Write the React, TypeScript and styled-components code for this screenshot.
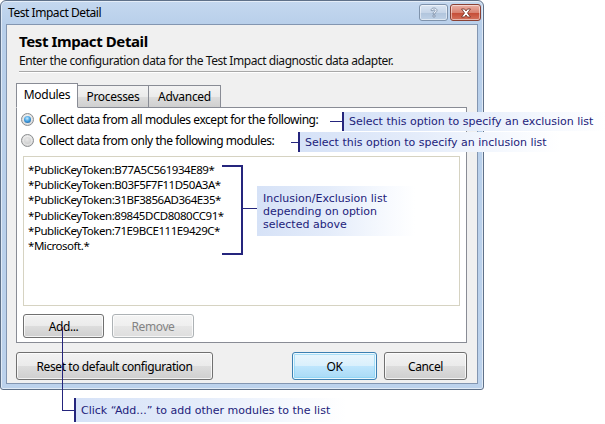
import React from 'react';
import styled, { createGlobalStyle, css } from 'styled-components';

const GlobalStyle = createGlobalStyle`
  html, body {
    margin: 0;
    padding: 0;
    background: #ffffff;
  }
  body {
    font-family: "Noto Sans", "Liberation Sans", sans-serif;
    font-size: 12px;
    color: #000;
  }
`;

const UI_FONT = `"Noto Sans", "Liberation Sans", sans-serif`;
const NOTE_FONT = `"DejaVu Sans", "Liberation Sans", sans-serif`;
const NAVY = '#25257d';

const Stage = styled.div`
  position: relative;
  width: 605px;
  height: 424px;
  overflow: hidden;
  background: #ffffff;
`;

const Window = styled.div`
  width: 484px;
  height: 390px;
  box-sizing: border-box;
  border: 1px solid #5f7189;
  border-radius: 6px 6px 3px 3px;
  background: linear-gradient(#c4d8ef, #b8cfea 24px, #bcd2ec);
  box-shadow: inset 0 0 0 1px rgba(255, 255, 255, 0.55);
  display: flex;
  flex-direction: column;
  padding: 0 5px 5px;
`;

const TitleBar = styled.div`
  height: 23px;
  display: flex;
  justify-content: space-between;
  align-items: flex-start;
`;

const Title = styled.div`
  font: 12px ${UI_FONT};
  line-height: 24px;
  padding-left: 2px;
  letter-spacing: -0.45px;
`;

const CaptionButtons = styled.div`
  display: flex;
  gap: 2px;
  margin: 3px -3px 0 0;
`;

const CaptionButton = styled.div<{ $close?: boolean }>`
  width: 29px;
  height: 17px;
  box-sizing: border-box;
  border: 1px solid #7f93ac;
  border-radius: 3px;
  display: flex;
  align-items: center;
  justify-content: center;
  background: linear-gradient(#dbe6f3, #c6d5e8 50%, #b0c4dc 51%, #bfd1e6);
  box-shadow: inset 0 0 0 1px rgba(255, 255, 255, 0.5);
  ${(p) =>
    p.$close &&
    css`
      width: 31px;
      border-color: #8a4134;
      background: linear-gradient(#eab0a5, #d98372 50%, #c44a34 51%, #d4725d);
    `}
`;

const Client = styled.div`
  flex: 1;
  background: #f0f0f0;
  border: 1px solid #8396b1;
  display: flex;
  flex-direction: column;
`;

const Header = styled.div`
  padding: 6px 6px 0 12px;
`;

const Heading = styled.div`
  font: bold 15px ${UI_FONT};
  line-height: 20px;
  letter-spacing: -0.4px;
  margin-bottom: 2px;
`;

const Description = styled.div`
  font: 12px ${UI_FONT};
  line-height: 16px;
  letter-spacing: -0.45px;
  color: #111;
`;

const Separator = styled.div`
  margin-top: 2px;
  height: 1px;
  background: #a8a8a8;
  box-shadow: 0 1px 0 #ffffff;
`;

const TabArea = styled.div`
  margin: 11px 10px 0 9px;
  display: flex;
  flex-direction: column;
`;

const TabStrip = styled.div`
  display: flex;
  align-items: flex-end;
  height: 25px;
  position: relative;
  z-index: 1;
  margin-bottom: -1px;
`;

const Tab = styled.div<{ $active?: boolean; $width: number }>`
  width: ${(p) => p.$width}px;
  height: 23px;
  box-sizing: border-box;
  border: 1px solid #898c95;
  margin-right: -1px;
  display: flex;
  align-items: center;
  justify-content: center;
  font: 12px ${UI_FONT};
  letter-spacing: -0.3px;
  background: linear-gradient(#f3f3f3, #ebebeb 50%, #dddddd 51%, #cfcfcf);
  ${(p) =>
    p.$active &&
    css`
      height: 25px;
      background: #ffffff;
      border-bottom-color: #ffffff;
      padding-bottom: 2px;
      position: relative;
      z-index: 2;
    `}
`;

const Panel = styled.div`
  border: 1px solid #898c95;
  background: #ffffff;
  padding: 1px 6px 4px;
  display: flex;
  flex-direction: column;
`;

const RadioRow = styled.label`
  height: 21px;
  display: flex;
  align-items: center;
  gap: 5px;
  padding-left: 4px;
  margin-left: -6px;
  font: 12px ${UI_FONT};
  letter-spacing: -0.45px;
`;

const Radio = styled.span<{ $checked?: boolean }>`
  width: 13px;
  height: 13px;
  box-sizing: border-box;
  border-radius: 50%;
  border: 1px solid #8a8c8e;
  background: radial-gradient(circle at 50% 40%, #f6f6f6 20%, #d4d4d4 80%);
  display: flex;
  align-items: center;
  justify-content: center;

  &::after {
    content: '';
    width: 7px;
    height: 7px;
    border-radius: 50%;
    background: ${(p) =>
      p.$checked
        ? 'radial-gradient(circle at 45% 35%, #c8ecff 0%, #46a2e2 45%, #104f8e 100%)'
        : 'radial-gradient(circle at 45% 35%, #e8e8e8 0%, #c6c6c6 100%)'};
  }
`;

const ModuleList = styled.div`
  margin-top: 5px;
  height: 150px;
  box-sizing: border-box;
  border: 1px solid #d6d3c2;
  padding: 5px 4px;
  background: #ffffff;
`;

const ModuleItem = styled.div`
  font: 11.5px ${UI_FONT};
  line-height: 15.2px;
  letter-spacing: -0.45px;
`;

const ButtonRow = styled.div`
  display: flex;
  gap: 8px;
  margin-top: 8px;
`;

const Button = styled.button<{ $width: number; $height?: number; $default?: boolean }>`
  width: ${(p) => p.$width}px;
  height: ${(p) => p.$height ?? 24}px;
  box-sizing: border-box;
  border: 1px solid #707070;
  border-radius: 3px;
  padding: 0;
  font: 12px ${UI_FONT};
  letter-spacing: -0.4px;
  color: #000;
  background: linear-gradient(#f2f2f2, #ebebeb 50%, #dddddd 51%, #cfcfcf);
  box-shadow: inset 0 0 0 1px rgba(255, 255, 255, 0.75);

  &:disabled {
    border-color: #adb2b5;
    color: #838383;
    background: linear-gradient(#f4f4f4, #efefef 50%, #e6e6e6 51%, #dedede);
  }

  ${(p) =>
    p.$default &&
    css`
      border-color: #3c7fb1;
      background: linear-gradient(#eaf6fd, #d9f0fc 50%, #bee6fd 51%, #a7d9f5);
      box-shadow: inset 0 0 0 1px rgba(255, 255, 255, 0.8), inset 0 0 0 2px rgba(128, 210, 245, 0.6);
    `}
`;

const Footer = styled.div`
  display: flex;
  align-items: center;
  margin: 9px 10px 0 9px;
  gap: 7px;
`;

const Spacer = styled.div`
  flex: 1;
`;

/* annotations lying over the screenshot */

const Leader = styled.div<{ $x: number; $y: number; $w: number; $h: number }>`
  position: absolute;
  left: ${(p) => p.$x}px;
  top: ${(p) => p.$y}px;
  width: ${(p) => p.$w}px;
  height: ${(p) => p.$h}px;
  box-sizing: border-box;
  border-color: ${NAVY};
  border-style: solid;
  border-width: 0;
  z-index: 5;
`;

const Note = styled.div<{ $x: number; $y: number; $w: number; $h: number; $bar?: boolean }>`
  position: absolute;
  left: ${(p) => p.$x}px;
  top: ${(p) => p.$y}px;
  width: ${(p) => p.$w}px;
  height: ${(p) => p.$h}px;
  box-sizing: border-box;
  z-index: 5;
  display: flex;
  flex-direction: column;
  justify-content: center;
  padding-left: ${(p) => (p.$bar ? 5 : 6)}px;
  border-left: ${(p) => (p.$bar ? `2px solid ${NAVY}` : 'none')};
  background: linear-gradient(90deg, #d6e2f7 0%, #e4ecfa 45%, #f6f9fe 80%, rgba(255, 255, 255, 0.9) 100%);
  font: 11px ${NOTE_FONT};
  line-height: 13px;
  color: #22227a;
  white-space: nowrap;
`;

const HelpIcon = () => (
  <svg width="10" height="12" viewBox="0 0 10 12">
    <path
      d="M2 3.5 C2 1.5 3.5 1 5 1 C6.8 1 8 2 8 3.5 C8 5 6 5.3 6 7 L4 7 C4 4.8 6 4.6 6 3.6 C6 3 5.6 2.7 5 2.7 C4.3 2.7 4 3.1 4 3.8 Z M4 8 L6 8 L6 10 L4 10 Z"
      fill="#e9eff7"
      stroke="#7d90a8"
      strokeWidth="0.8"
    />
  </svg>
);

const CloseIcon = () => (
  <svg width="12" height="10" viewBox="0 0 12 10">
    <path
      d="M1.5 1 L4.5 1 L6 3 L7.5 1 L10.5 1 L7.5 5 L10.5 9 L7.5 9 L6 7 L4.5 9 L1.5 9 L4.5 5 Z"
      fill="#ffffff"
      stroke="#6b2a20"
      strokeWidth="0.8"
    />
  </svg>
);

const modules = [
  '*PublicKeyToken:B77A5C561934E89*',
  '*PublicKeyToken:B03F5F7F11D50A3A*',
  '*PublicKeyToken:31BF3856AD364E35*',
  '*PublicKeyToken:89845DCD8080CC91*',
  '*PublicKeyToken:71E9BCE111E9429C*',
  '*Microsoft.*',
];

const App: React.FC = () => {
  return (
    <Stage>
      <GlobalStyle />
      <Window>
        <TitleBar>
          <Title>Test Impact Detail</Title>
          <CaptionButtons>
            <CaptionButton>
              <HelpIcon />
            </CaptionButton>
            <CaptionButton $close>
              <CloseIcon />
            </CaptionButton>
          </CaptionButtons>
        </TitleBar>

        <Client>
          <Header>
            <Heading>Test Impact Detail</Heading>
            <Description>Enter the configuration data for the Test Impact diagnostic data adapter.</Description>
            <Separator />
          </Header>

          <TabArea>
            <TabStrip>
              <Tab $active $width={62}>Modules</Tab>
              <Tab $width={72}>Processes</Tab>
              <Tab $width={73}>Advanced</Tab>
            </TabStrip>

            <Panel>
              <RadioRow>
                <Radio $checked />
                Collect data from all modules except for the following:
              </RadioRow>
              <RadioRow>
                <Radio />
                Collect data from only the following modules:
              </RadioRow>

              <ModuleList>
                {modules.map((m) => (
                  <ModuleItem key={m}>{m}</ModuleItem>
                ))}
              </ModuleList>

              <ButtonRow>
                <Button $width={81}>Add...</Button>
                <Button $width={82} disabled>
                  Remove
                </Button>
              </ButtonRow>
            </Panel>
          </TabArea>

          <Footer>
            <Button $width={197} $height={28}>
              Reset to default configuration
            </Button>
            <Spacer />
            <Button $width={85} $height={28} $default>
              OK
            </Button>
            <Button $width={83} $height={28}>
              Cancel
            </Button>
          </Footer>
        </Client>
      </Window>

      {/* exclusion list callout */}
      <Leader $x={330} $y={121} $w={12} $h={1} style={{ borderTopWidth: 1 }} />
      <Note $x={342} $y={112} $w={263} $h={19} $bar>
        Select this option to specify an exclusion list
      </Note>

      {/* inclusion list callout */}
      <Leader $x={291} $y={142} $w={7} $h={1} style={{ borderTopWidth: 1 }} />
      <Note $x={298} $y={132} $w={262} $h={20} $bar>
        Select this option to specify an inclusion list
      </Note>

      {/* bracket round the module list */}
      <Leader $x={222} $y={165} $w={21} $h={90} style={{ borderWidth: '2px 2px 2px 0' }} />
      <Leader $x={243} $y={208} $w={14} $h={1} style={{ borderTopWidth: 1 }} />
      <Note $x={257} $y={186} $w={158} $h={50}>
        <span>Inclusion/Exclusion list</span>
        <span>depending on option</span>
        <span>selected above</span>
      </Note>

      {/* add button callout */}
      <Leader $x={62} $y={327} $w={12} $h={84} style={{ borderWidth: '0 0 1px 1px' }} />
      <Note $x={74} $y={398} $w={272} $h={24} $bar>
        Click “Add...” to add other modules to the list
      </Note>
    </Stage>
  );
};

export default App;
